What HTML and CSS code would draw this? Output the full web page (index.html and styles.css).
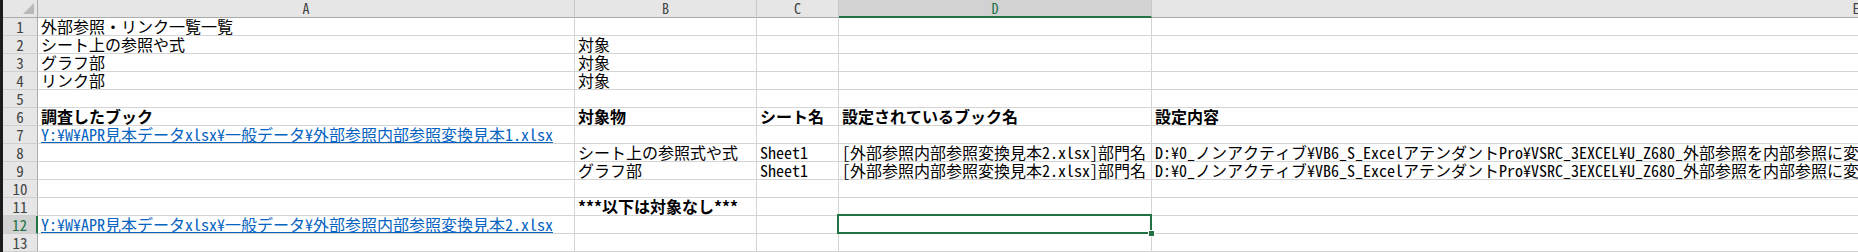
FILE: index.html
```html
<!DOCTYPE html>
<html lang="ja">
<head>
<meta charset="utf-8">
<title>外部参照・リンク一覧一覧</title>
<link rel="stylesheet" href="styles.css">
</head>
<body>
<div class="sheet">
  <div class="corner"><span class="tri"></span></div>
  <div class="colhdr">A</div>
  <div class="colhdr">B</div>
  <div class="colhdr">C</div>
  <div class="colhdr sel">D</div>
  <div class="colhdr last">E</div>

  <div class="rowhdr">1</div>
  <div class="cell">外部参照・リンク一覧一覧</div>
  <div class="cell"></div><div class="cell"></div><div class="cell"></div><div class="cell"></div>

  <div class="rowhdr">2</div>
  <div class="cell">シート上の参照や式</div>
  <div class="cell">対象</div><div class="cell"></div><div class="cell"></div><div class="cell"></div>

  <div class="rowhdr">3</div>
  <div class="cell">グラフ部</div>
  <div class="cell">対象</div><div class="cell"></div><div class="cell"></div><div class="cell"></div>

  <div class="rowhdr">4</div>
  <div class="cell">リンク部</div>
  <div class="cell">対象</div><div class="cell"></div><div class="cell"></div><div class="cell"></div>

  <div class="rowhdr">5</div>
  <div class="cell"></div><div class="cell"></div><div class="cell"></div><div class="cell"></div><div class="cell"></div>

  <div class="rowhdr">6</div>
  <div class="cell bold">調査したブック</div>
  <div class="cell bold">対象物</div>
  <div class="cell bold">シート名</div>
  <div class="cell bold">設定されているブック名</div>
  <div class="cell bold">設定内容</div>

  <div class="rowhdr">7</div>
  <div class="cell"><span class="link">Y:¥W¥APR見本データxlsx¥一般データ¥外部参照内部参照変換見本1.xlsx</span></div>
  <div class="cell"></div><div class="cell"></div><div class="cell"></div><div class="cell"></div>

  <div class="rowhdr">8</div>
  <div class="cell"></div>
  <div class="cell">シート上の参照式や式</div>
  <div class="cell">Sheet1</div>
  <div class="cell">[外部参照内部参照変換見本2.xlsx]部門名</div>
  <div class="cell">D:¥0_ノンアクティブ¥VB6_S_ExcelアテンダントPro¥VSRC_3EXCEL¥U_Z680_外部参照を内部参照に変換</div>

  <div class="rowhdr">9</div>
  <div class="cell"></div>
  <div class="cell">グラフ部</div>
  <div class="cell">Sheet1</div>
  <div class="cell">[外部参照内部参照変換見本2.xlsx]部門名</div>
  <div class="cell">D:¥0_ノンアクティブ¥VB6_S_ExcelアテンダントPro¥VSRC_3EXCEL¥U_Z680_外部参照を内部参照に変換</div>

  <div class="rowhdr">10</div>
  <div class="cell"></div><div class="cell"></div><div class="cell"></div><div class="cell"></div><div class="cell"></div>

  <div class="rowhdr">11</div>
  <div class="cell"></div>
  <div class="cell bold">***以下は対象なし***</div>
  <div class="cell"></div><div class="cell"></div><div class="cell"></div>

  <div class="rowhdr sel">12</div>
  <div class="cell"><span class="link">Y:¥W¥APR見本データxlsx¥一般データ¥外部参照内部参照変換見本2.xlsx</span></div>
  <div class="cell"></div><div class="cell"></div>
  <div class="cell active"><span class="selbox"></span><span class="handle"></span></div>
  <div class="cell"></div>

  <div class="rowhdr">13</div>
  <div class="cell"></div><div class="cell"></div><div class="cell"></div><div class="cell"></div><div class="cell"></div>
</div>
</body>
</html>
```

FILE: styles.css
```css
html, body {
  margin: 0;
  padding: 0;
  background: #ffffff;
  overflow: hidden;
}

.sheet {
  display: grid;
  grid-template-columns: 35px 537px 182px 82px 313px 1408px;
  grid-auto-rows: 18px;
  border-left: 3px solid #1c1c1c;
  font-family: "Noto Sans Mono CJK JP", "Noto Sans CJK JP", monospace;
  font-size: 16px;
  line-height: 17px;
  color: #000;
}

.corner {
  position: relative;
  background: #e6e6e6;
  border-right: 1px solid #ababab;
  border-bottom: 1px solid #ababab;
  box-sizing: border-box;
}

.tri {
  position: absolute;
  right: 3px;
  bottom: 3px;
  width: 0;
  height: 0;
  border-left: 11px solid transparent;
  border-bottom: 11px solid #b8b8b8;
}

.colhdr {
  box-sizing: border-box;
  background: #e6e6e6;
  border-right: 1px solid #c8c8c8;
  border-bottom: 1px solid #ababab;
  display: flex;
  align-items: center;
  justify-content: center;
  font-size: 14px;
  color: #444;
}

.colhdr.sel {
  background: #d2d2d2;
  color: #217346;
  border-bottom: 2px solid #217346;
}

.colhdr.last {
  border-right: none;
}

.rowhdr {
  box-sizing: border-box;
  background: #e6e6e6;
  border-right: 1px solid #ababab;
  border-bottom: 1px solid #d0d0d0;
  display: flex;
  align-items: center;
  justify-content: center;
  font-size: 15px;
  color: #444;
}

.rowhdr.sel {
  background: #d2d2d2;
  color: #217346;
  border-right: 2px solid #217346;
}

.cell {
  box-sizing: border-box;
  border-right: 1px solid #d4d4d4;
  border-bottom: 1px solid #d4d4d4;
  padding: 0 3px;
  white-space: nowrap;
  display: flex;
  align-items: flex-end;
  overflow: visible;
}

.bold {
  font-weight: 700;
}

.link {
  color: #0563c1;
  text-decoration: underline;
}

.active {
  position: relative;
}

.selbox {
  position: absolute;
  left: -2px;
  top: -2px;
  right: -1px;
  bottom: -1px;
  border: 2px solid #217346;
}

.handle {
  position: absolute;
  right: -4px;
  bottom: -4px;
  width: 5px;
  height: 5px;
  background: #217346;
  border: 1px solid #ffffff;
}
```
